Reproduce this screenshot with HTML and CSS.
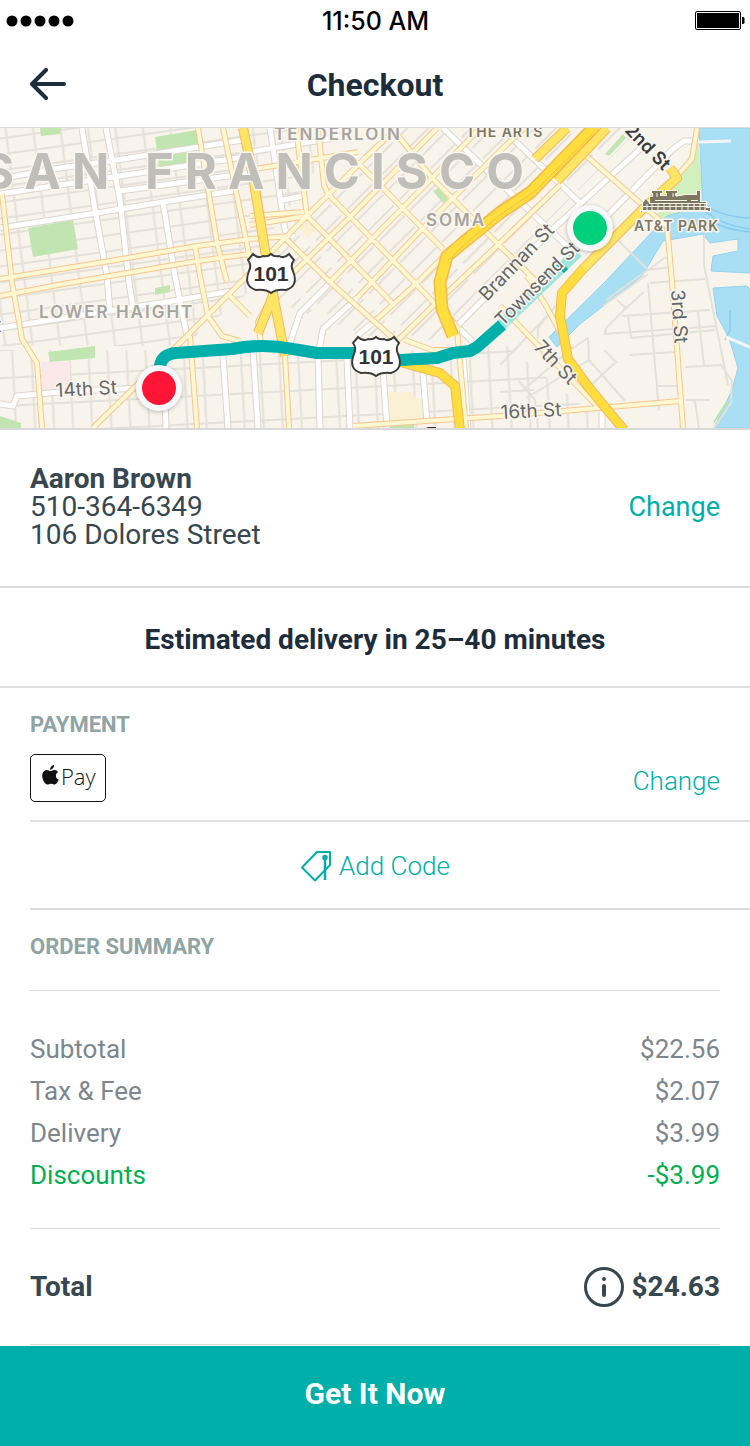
FILE: index.html
```html
<!DOCTYPE html>
<html lang="en">
<head>
<meta charset="utf-8">
<meta name="viewport" content="width=device-width, initial-scale=1">
<title>Checkout</title>
<link rel="stylesheet" href="styles.css">
</head>
<body>
<div class="screen">
  <div class="status">
    <svg class="signal" width="68" height="12" viewBox="0 0 68 12" aria-hidden="true">
      <circle cx="6" cy="6" r="5.5"/><circle cx="20" cy="6" r="5.5"/><circle cx="34" cy="6" r="5.5"/><circle cx="48" cy="6" r="5.5"/><circle cx="62" cy="6" r="5.5"/>
    </svg>
    <span class="clock">11:50 AM</span>
    <svg class="battery" width="50" height="20" viewBox="0 0 50 20" aria-hidden="true">
      <rect x=".5" y=".5" width="45" height="18" rx="1.5" fill="#fff" stroke="#000"/>
      <rect x="2" y="2" width="42" height="15"/>
      <path d="M47 6h1q1.500 0 1.500 1.500v4q0 1.500-1.500 1.500h-1z"/>
    </svg>
  </div>
  <header class="nav">
    <button class="back" type="button" aria-label="Back">
      <svg width="36" height="34" viewBox="0 0 36 34" fill="none" stroke="currentColor" stroke-width="4" stroke-linecap="round" stroke-linejoin="round"><path d="M34 16H2M16 2L2 16l14 14"/></svg>
    </button>
    <h1 class="title">Checkout</h1>
  </header>

  <svg class="map" viewBox="0 128 750 300" role="img" aria-label="Delivery route map of San Francisco">
    <defs>
      <pattern id="west" width="27" height="16" patternUnits="userSpaceOnUse" patternTransform="translate(4 2) skewY(-8) skewX(7)"><path class="lane" d="M0 8H27M13 0V16"/></pattern>
      <pattern id="soma" width="44" height="15" patternUnits="userSpaceOnUse" patternTransform="translate(350 218) rotate(-45)"><path class="lane" d="M4 7H40"/></pattern>
      <pattern id="south" width="19" height="28" patternUnits="userSpaceOnUse" patternTransform="translate(4 6) skewY(-3) skewX(3)"><path class="lane" d="M0 8H19M9 0V28"/></pattern>
    </defs>
    <rect y="128" width="750" height="300" fill="#f8f4ec"/>
    <path fill="url(#west)" d="M0 128H240L268 276L184 346H0z"/>
    <path fill="url(#west)" d="M244 128H345L250 262z"/>
    <path fill="url(#soma)" d="M396 128H640L470 300L440 340H380L270 300L262 272z"/>
    <path fill="url(#south)" d="M0 350H460L500 340L600 420V428H0z"/>

    <path fill="#c1e5b0" d="M40 128h21l-1 6-19 2zM155 137l42-7v31l-38 6zM28 228l45-8 5 29-45 8zM155 288l15-3v7l-15 3zM48 352l47-6v12l-45 4zM0 416l21 7v5H0zM438 188l10 11-5 4-10-12zM605 154l18-20 3 4-17 18zM390 424h24v4h-24z"/>
    <path fill="#d1f0be" d="M698 140l5 62-35 17-12-3 21-38z"/>
    <path fill="#fae9e8" d="M42 362h28v28l-28 2z"/>
    <path fill="#faf0d4" d="M388 392h24l4 7h7v22h-35zM297 226l12-6 7 10-9 8z"/>

    <g class="water">
      <path d="M699 128H750V273L711 271L713 256L738 251V239L710 243L703 234L663 241L642 276L580 324L557 347L549 337L603 284L667 216L703 206z"/>
      <path d="M713 288L747 286L750 289V428H714L732 390L738 368L729 338L717 316z"/>
    </g>
    <path fill="none" stroke="#86caef" stroke-width="1.500" d="M704 204q17 13 46 14M704 211q20 15 46 18M708 220q18 10 42 12M730 310v20l-5 10"/>
    <path fill="none" stroke="#f5f5f5" stroke-width="3" d="M726 337l24 10M699 142l32-1"/>
    <path fill="none" stroke="#b9e6a7" stroke-width="2" d="M714 422l13-20"/>

    <path class="lane" d="M603 306l45-32M606 300l60-43M606 328l-1 6 112-8M606 328l20-20 18-16M622 316l88-6M628 316l3 22 84-8M648 283l11 128M629 355l45-3M650 283l55-4M704 235v30l24 120M698 312l6 54M685 367l36-2 11 16-1 22-17 25M658 386h20M686 400h24M695 401l4 27M570 350l18-12 1 22 36 41M604 350l12 12-26 24M589 360l-63 38M570 350l-49 42M519 381l16 19 3 28M500 365l50-52M500 392l34-2M618 240l30 30M648 270l24-3M617 300l10 9M560 300l-22 28v10"/>

    <g class="case-white"><use href="#white-roads"/></g>
    <g class="fill-white">
      <path id="white-roads" d="M82 128L94 204L107 276L110 312M106 128L120 200L129 282L133 308M0 179L53 169L110 161L243 140M0 194L73 183L113 177L250 156M120 191L250 173M0 228L97 213L163 202L233 191M163 202L175 276L187 336M0 328L160 303L232 291M0 404L13 406L17 396L60 392L140 388M223 356L228 428M165 400L166 428M330 283L300 313L290 343M357 298L323 329L318 356L320 428M377 319L357 336M253 349L258 428M347 359L350 428M383 370L387 428M423 373L427 423M463 355L468 428M443 128L500 183L567 246M510 136L580 203M553 229L640 149M607 216L673 149L684 141L699 141M457 326L560 222M432 301L472 341M270 128L285 230L294 237M250 152L345 136M283 200L303 196M602 408V428"/>
    </g>

    <g class="case-pale"><use href="#pale-roads"/></g>
    <g class="fill-pale">
      <path id="pale-roads" d="M2 194L12 282L22 339L37 363L42 428M0 279L110 261L197 246L250 239L290 236M0 296L63 284L197 261L250 254M198 128L217 243L227 282M223 128L250 259M195 246L200 276L208 316L222 336L240 341M93 428L180 343L247 276L307 216L365 158L397 128M190 336L197 428M230 296L250 316M250 225L307 216M250 216L304 212M296 128L307 216M318 128L324 185L328 194L413 281L460 330M307 216L372 282L395 306M358 163L443 249M358 163L395 200M395 132L432 178L470 216L500 246L537 282M283 236L330 282L395 340M293 273L350 217L437 128M330 282L372 239L432 178L480 128M357 298L372 282L422 229L500 151L524 128M397 341L433 306L500 243L560 185M377 319L417 283L450 250M250 170L358 152M262 350L258 322L270 300M285 356L289 428M353 426L500 416L563 411L680 401M500 306L597 406M583 153L663 223L667 226L672 282L683 428M697 128L692 159L677 176M527 276L545 304L570 350M405 340L432 350L450 350M457 330L466 428"/>
    </g>

    <g class="case-gold">
      <path d="M243 128L251 165L268 268L285 356M273 296L258 333M400 362L440 373L455 386L460 430M535 159L567 128M557 181L607 128M670 168L677 178L643 209L583 269L562 293L560 316L568 359L590 389L624 430"/>
    </g>
    <path class="fill-gold" d="M243 128L251 165L268 268L285 356M273 296L258 333M535 159L567 128M557 181L607 128M670 168L677 178L643 209L583 269"/>
    <path class="fill-gold strong" d="M400 362L440 373L455 386L460 430M583 269L562 293L560 316L568 359L590 389L624 430"/>
    <path fill="none" stroke="#f5b94f" stroke-width="13" stroke-linejoin="round" d="M595 126L530 193L500 213L463 243L447 256L440 282L442 309L453 336"/>
    <path fill="none" stroke="#ffde3e" stroke-width="10" stroke-linejoin="round" d="M595 126L530 193L500 213L463 243L447 256L440 282L442 309L453 336"/>
    <path fill="none" stroke="#f5bd45" stroke-width="1" d="M586 128L527 187L497 207L460 237L443 254M592 134L535 191L500 215L466 243L449 260"/>

    <path fill="none" stroke="#9be5df" stroke-width="11" d="M496 330L578 252"/>
    <path fill="none" stroke="#00afaa" stroke-width="11" stroke-dasharray="6 32" d="M560 269L578 252"/>
    <path fill="none" stroke="#00afaa" stroke-width="12" stroke-linejoin="round" d="M160 378V366Q162 354 176 353L232 349Q262 343 293 349L317 353L353 353L400 360L437 358L453 353L470 351L477 347L502 325"/>

    <g class="city"><text x="-18" y="189">SAN</text><text x="145" y="189">FRANCISCO</text></g>
    <g class="district">
      <text x="274" y="140">TENDERLOIN</text><text x="426" y="226">SOMA</text><text x="39" y="318">LOWER HAIGHT</text>
    </g>
    <g class="poi"><text x="466" y="137">THE ARTS</text><text x="634" y="231">AT&amp;T PARK</text></g>
    <g class="street">
      <text transform="translate(56 397) rotate(-3)">14th St</text>
      <text transform="translate(501 419) rotate(-3)">16th St</text>
      <text transform="translate(487 302) rotate(-46)">Brannan St</text>
      <text class="narrow" transform="translate(503 327) rotate(-45)">Townsend St</text>
      <text transform="translate(533 348) rotate(46)">7th St</text>
      <text transform="translate(671 290) rotate(86)">3rd St</text>
      <text class="dark" transform="translate(624 131) rotate(46)">2nd St</text>
      <text x="-5" y="332">t</text>
    </g>
    <path fill="#333" d="M426 428l2-1h8v1z"/>

    <path fill="#7d7660" stroke="#f8f4ec" stroke-width="2" paint-order="stroke" d="M641 213v-2h2v-8l3-4 3 4h1v-6h3v-4h-1v-2h10v2h-2v3h7v-3h-1v-2h11v2h-2v3h6l4-1h12v-4h3v11h6v6h4v3h-68z"/>
    <path fill="none" stroke="#f8f4ec" d="M649 203.500h59M643 206.500h65M643 210.500h65M655 200.500h32M691 200.500h7M647 204v6M652 204v6M658 204v6M664 204v6M670 204v6M676 204v6M682 204v6M688 204v6M694 204v6M700 204v6M705 204v6"/>
    <path fill="none" stroke="#f8f4ec" d="M657 193v4M673 193v4M677 193v4"/>

    <g class="shield" transform="translate(271 273)">
      <path d="M-18-19Q-13-14-8-17Q-3-16 0-19Q3-16 8-17Q13-14 18-19L23-13Q19-8 22-2Q28 13 15 17Q5 16 0 20Q-5 16-15 17Q-28 13-22-2Q-19-8-23-13z"/><text y="8">101</text>
    </g>
    <g class="shield" transform="translate(376 356)">
      <path d="M-18-19Q-13-14-8-17Q-3-16 0-19Q3-16 8-17Q13-14 18-19L23-13Q19-8 22-2Q28 13 15 17Q5 16 0 20Q-5 16-15 17Q-28 13-22-2Q-19-8-23-13z"/><text y="8">101</text>
    </g>
    <g class="pin"><circle cx="590" cy="228" r="23"/><circle cx="159" cy="388" r="23"/></g>
    <circle cx="590" cy="228" r="17" fill="#00cf7c"/><circle cx="159" cy="388" r="17" fill="#ff1636"/>
  </svg>

  <main>
    <section class="address">
      <address class="contact"><strong>Aaron Brown</strong><span>510-364-6349</span><span>106 Dolores Street</span></address>
      <button class="link" type="button" aria-label="Change address">Change</button>
    </section>
    <p class="eta">Estimated delivery in 25–40 minutes</p>

    <section class="payment">
      <h2 class="label">PAYMENT</h2>
      <div class="method">
        <svg class="paycard" width="76" height="48" viewBox="0 0 76 48" role="img" aria-label="Apple Pay">
          <rect x=".5" y=".5" width="75" height="47" rx="4.500" fill="#fff" stroke="#111"/>
          <path fill="#111" d="M20.300 17.100c1.200 0 2.400-1.300 4-1.200 1.700.1 3 .8 3.800 2-3.200 2-2.700 6.300.6 7.600-.7 2-2.200 4.900-4 5-1.400 0-1.800-.8-3.600-.8s-2.200.8-3.600.8c-2.500.1-5.300-5.100-5.300-8.600 0-3.700 2.200-5.900 4.700-5.900 1.500 0 2.500 1.100 3.400 1.100zM20.100 15.800c-.2-2.100 1.500-4.400 3.900-4.800.3 2.300-1.700 4.700-3.900 4.800z"/>
          <text x="31" y="31">Pay</text>
        </svg>
        <button class="link light" type="button" aria-label="Change payment method">Change</button>
      </div>
    </section>
    <div class="promo">
      <button class="link light code" type="button">
        <svg width="32" height="32" viewBox="0 0 32 32" fill="none" stroke="currentColor" stroke-width="2" stroke-linejoin="round"><path d="M17 2h13v13L15 30.500 2 17.500z"/><path d="M25 7v23" stroke-width="2.500"/><circle cx="25" cy="7.500" r="2" fill="currentColor" stroke-width="1.500"/></svg>
        <span>Add Code</span>
      </button>
    </div>

    <section class="summary">
      <h2 class="label">ORDER SUMMARY</h2>
      <table class="costs">
        <tbody>
          <tr><th scope="row">Subtotal</th><td>$22.56</td></tr>
          <tr><th scope="row">Tax &amp; Fee</th><td>$2.07</td></tr>
          <tr><th scope="row">Delivery</th><td>$3.99</td></tr>
          <tr class="discount"><th scope="row">Discounts</th><td>-$3.99</td></tr>
        </tbody>
      </table>
      <div class="total">
        <span>Total</span>
        <span class="sum">
          <button class="info" type="button" aria-label="Total details"><svg width="40" height="40" viewBox="0 0 40 40" fill="none" stroke="currentColor"><circle cx="20" cy="20" r="18.500" stroke-width="3"/><path d="M20 19v9" stroke-width="4" stroke-linecap="round"/><circle cx="20" cy="12" r="2" fill="currentColor" stroke="none"/></svg></button>
          <span>$24.63</span>
        </span>
      </div>
    </section>
  </main>
  <button class="submit" type="button">Get It Now</button>
</div>
</body>
</html>
```
FILE: styles.css
```css
* { box-sizing: border-box; }
body { margin: 0; background: #fff; color: #37474f; font: 28px/28px Roboto, "Liberation Sans", sans-serif; }
h1, h2, p { margin: 0; }
button { padding: 0; border: 0; background: none; color: inherit; font: inherit; cursor: pointer; }
svg { display: block; }
.screen { display: flex; flex-direction: column; min-height: 100vh; }

.status { display: grid; grid-template-columns: 1fr auto 1fr; align-items: center; height: 42px; padding: 0 5px 0 6px; color: #000; }
.clock { font: 500 25px/28px Inter, sans-serif; }
.battery { justify-self: end; }
.nav { display: grid; grid-template-columns: 36px 1fr 36px; align-items: center; height: 86px; padding: 0 30px; border-bottom: 1px solid #d9d9d9; color: #1e2d3b; }
.title { font-size: 32px; line-height: 40px; font-weight: 700; text-align: center; }

.map { width: 100%; height: auto; overflow: hidden; font-family: Inter, sans-serif; }
.lane { fill: none; stroke: #e4e0da; stroke-width: 2; }
.water path { fill: #a9dff4; stroke: #93d2ee; stroke-width: 1; }
.case-white { fill: none; stroke: #dcd6cd; stroke-width: 7; stroke-linejoin: round; }
.fill-white { fill: none; stroke: #fff; stroke-width: 5; stroke-linejoin: round; }
.case-pale { fill: none; stroke: #f7c690; stroke-width: 6; stroke-linejoin: round; }
.fill-pale { fill: none; stroke: #fdf7d2; stroke-width: 4; stroke-linejoin: round; }
.case-gold { fill: none; stroke: #f3b95d; stroke-width: 10; stroke-linejoin: round; }
.fill-gold { fill: none; stroke: #ffe566; stroke-width: 8; stroke-linejoin: round; }
.fill-gold.strong { stroke: #ffdd3c; }
.map text { stroke: #f9f6ef; stroke-width: 3; stroke-linejoin: round; paint-order: stroke; }
.city { fill: #c0beb9; font-size: 49px; font-weight: 700; letter-spacing: 11px; }
.district { fill: #a6a49f; font-size: 17px; font-weight: 600; letter-spacing: 2px; }
.poi { fill: #7d7660; font-size: 14px; font-weight: 600; letter-spacing: 1px; }
.street { fill: #666; font-size: 19px; font-weight: 400; }
.street .narrow { font-family: Roboto, sans-serif; }
.street .dark { fill: #3c3c3c; font-size: 18px; font-weight: 600; }
.shield path { fill: #fff; stroke: #3c3c3c; stroke-width: 2; }
.map .shield text { fill: #333; stroke: none; font: 700 21px "Liberation Sans", sans-serif; text-anchor: middle; }
.pin { fill: #f8f8f8; filter: drop-shadow(0 1px 2px rgb(0 0 0 / 25%)); }

.address { display: flex; justify-content: space-between; align-items: center; padding: 35px 30px 37px; border-top: 2px solid #d9d9d9; border-bottom: 2px solid #dcdcdc; }
.contact { display: flex; flex-direction: column; font-style: normal; }
.link { color: #00afaa; font-size: 27px; }
.light { font-size: 26px; font-weight: 300; }
.eta { padding: 38px 30px 32px; border-bottom: 2px solid #e0e0e0; color: #1e2d3b; font-weight: 700; text-align: center; }
.label { color: #90a4a4; font-size: 22px; line-height: 28px; font-weight: 700; }
.payment { margin-left: 30px; padding: 23px 30px 18px 0; border-bottom: 2px solid #e0e0e0; }
.method { display: flex; justify-content: space-between; align-items: center; margin-top: 15px; }
.method .link { padding-top: 6px; }
.paycard text { fill: #111; font: 300 22px "Open Sans", sans-serif; }
.promo { display: flex; justify-content: center; margin-left: 30px; padding: 28px 30px 26px 0; border-bottom: 2px solid #dcdcdc; }
.code { display: flex; align-items: center; gap: 7px; line-height: 34px; height: 32px; }
.summary { padding: 23px 30px 0; }
.summary .label { padding-bottom: 29px; border-bottom: 1px solid #dcdcdc; }
.costs { width: 100%; margin: 37px 0 32px; border-collapse: collapse; color: #7d868c; font-size: 26px; line-height: 42px; }
.costs th, .costs td { padding: 0; font-weight: 400; text-align: left; }
.costs td { text-align: right; }
.costs .discount { color: #00b050; }
.total { display: flex; justify-content: space-between; align-items: center; padding: 38px 0 37px; border-top: 1px solid #dcdcdc; border-bottom: 1px solid #dcdcdc; font-weight: 700; }
.total span { line-height: 30px; }
.sum { display: flex; align-items: center; gap: 8px; }
.submit { margin-top: auto; height: 100px; padding-bottom: 4px; background: #00afaa; color: #fff; font-size: 30px; font-weight: 700; }
```
